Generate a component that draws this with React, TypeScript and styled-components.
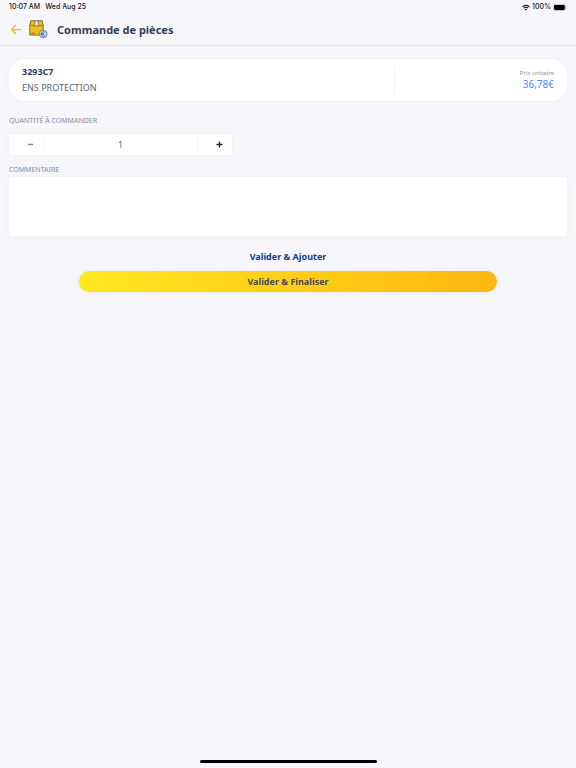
import React, { useState } from "react";
import styled, { createGlobalStyle } from "styled-components";

const GlobalStyle = createGlobalStyle`
  *, *::before, *::after { box-sizing: border-box; }
  body { margin: 0; background: #f6f6fb; }
  button, input, textarea { font: inherit; color: inherit; }
`;

const Screen = styled.div`
  min-height: 100vh;
  display: flex;
  flex-direction: column;
  background: #f6f6fb;
  color: #333f59;
  font-family: "Noto Sans", sans-serif;
`;

const StatusBar = styled.div`
  display: flex;
  align-items: center;
  justify-content: space-between;
  height: 14px;
  padding: 0 9px;
  color: #17171a;
  font: 500 7px/14px Inter, sans-serif;
`;

const StatusGroup = styled.div<{ $gap: number }>`
  display: flex;
  align-items: center;
  gap: ${({ $gap }) => $gap}px;
`;

const Header = styled.header`
  display: flex;
  align-items: center;
  height: 32px;
  padding: 0 9px;
  border-bottom: 1px solid #e5e5eb;
`;

const BackButton = styled.button`
  display: flex;
  padding: 0;
  margin-right: 5px;
  border: 0;
  background: none;
  color: #fdb91d;
  cursor: pointer;
`;

const Title = styled.h1`
  margin: 0 0 0 9px;
  font-size: 11px;
  line-height: 16px;
  font-weight: 700;
`;

const Content = styled.main`
  display: flex;
  flex-direction: column;
  padding: 13px 9px;
`;

const Card = styled.section`
  display: flex;
  align-items: center;
  height: 42px;
  padding: 0 13px;
  border-radius: 16px;
  background: #fff;
  box-shadow: 0 0 4px rgba(50, 50, 90, 0.05);
`;

const Product = styled.div`
  flex: 1;
`;

const Reference = styled.div`
  font-size: 9px;
  line-height: 16px;
  font-weight: 700;
`;

const ProductName = styled.div`
  color: #5b657b;
  font-size: 9px;
  line-height: 16px;
`;

const PriceBlock = styled.div`
  width: 30%;
  height: 27px;
  border-left: 1px solid #f3f3f7;
  text-align: right;
`;

const PriceLabel = styled.div`
  margin-top: 1px;
  color: #8b919e;
  font-size: 6px;
  line-height: 10px;
`;

const Price = styled.div`
  color: #4b8df0;
  font-size: 10px;
  line-height: 12px;
`;

const Label = styled.label<{ $top: number; $bottom: number }>`
  margin-top: ${({ $top }) => $top}px;
  margin-bottom: ${({ $bottom }) => $bottom}px;
  color: #858d9b;
  font-size: 7px;
  line-height: 10px;
`;

const Stepper = styled.div`
  display: flex;
  width: 40%;
  height: 21px;
  overflow: hidden;
  border-radius: 2px;
  background: #fff;
  box-shadow: 0 0 4px rgba(50, 50, 90, 0.05);
`;

const StepButton = styled.button`
  display: flex;
  align-items: center;
  justify-content: flex-end;
  width: 34px;
  padding: 0 9px;
  border: 0;
  background: none;
  color: #222326;
  cursor: pointer;

  &:disabled {
    color: #8e8e92;
    cursor: default;
  }
`;

const Quantity = styled.input`
  flex: 1;
  min-width: 0;
  padding: 0;
  border: 0;
  border-left: 1px solid #f6f6fa;
  border-right: 1px solid #f6f6fa;
  outline: 0;
  background: none;
  color: #5b657b;
  font-size: 9px;
  text-align: center;
`;

const Comment = styled.textarea`
  display: block;
  height: 59px;
  padding: 6px;
  border: 0;
  outline: 0;
  border-radius: 2px;
  resize: none;
  background: #fff;
  box-shadow: 0 0 4px rgba(50, 50, 90, 0.05);
  font-size: 9px;
`;

const Action = styled.button<{ $primary?: boolean }>`
  align-self: center;
  width: 75%;
  height: 21px;
  margin-top: ${({ $primary }) => ($primary ? 4 : 10)}px;
  padding: 0;
  border: 0;
  border-radius: 11px;
  background: ${({ $primary }) =>
    $primary ? "linear-gradient(100deg, #ffe81f, #ffb612)" : "none"};
  box-shadow: ${({ $primary }) =>
    $primary ? "0 0 4px rgba(50, 50, 90, 0.1)" : "none"};
  color: ${({ $primary }) => ($primary ? "#45474d" : "#123d8e")};
  font-size: 9px;
  line-height: 14px;
  font-weight: 700;
  cursor: pointer;
`;

const HomeIndicator = styled.div`
  align-self: center;
  width: 177px;
  height: 3px;
  margin: auto 0 5px;
  border-radius: 2px;
  background: #000;
`;

const WifiIcon = () => (
  <svg width="8" height="7" viewBox="0 0 16 13" aria-label="Wi-Fi">
    <path d="M8 12.5 5.6 10a3.4 3.4 0 0 1 4.8 0Z" fill="currentColor" />
    <path d="M3.6 7.8a6.2 6.2 0 0 1 8.8 0M1 5a10 10 0 0 1 14 0" fill="none" stroke="currentColor" strokeWidth="2.3" />
  </svg>
);

const BatteryIcon = () => (
  <svg width="14" height="7" viewBox="0 0 28 14" aria-label="Batterie">
    <rect x="0.5" y="0.8" width="24.5" height="12.4" rx="3.4" fill="none" stroke="#8f8f94" />
    <rect x="2" y="2.2" width="21.5" height="9.6" rx="2.2" fill="#000" />
    <path d="M26.4 4.8q1.8 2.2 0 4.4Z" fill="#8f8f94" />
  </svg>
);

const ArrowIcon = () => (
  <svg width="14" height="12" viewBox="0 0 14 12" aria-hidden="true">
    <path d="M6.4 1.6 2.4 5.6l4 4M2.5 5.6h9" fill="none" stroke="currentColor" strokeWidth="1.4" strokeLinecap="round" strokeLinejoin="round" />
  </svg>
);

const ParcelIcon = () => (
  <svg width="20" height="20" viewBox="0 0 20 20" aria-hidden="true">
    <path d="M2.8.8h11.4l1 4.4v9.9H1.8V5.2Z" fill="#f5bb1a" stroke="#66654f" strokeWidth=".9" strokeLinejoin="round" />
    <path d="M1.8 5.4h13.4" stroke="#7a713f" strokeWidth=".7" />
    <path d="M6.9.8h3.2v5.9l-1.6-.9-1.6.9Z" fill="#eef0f4" stroke="#66654f" strokeWidth=".7" strokeLinejoin="round" />
    <path d="M3.4 13.2h3.4" stroke="#66654f" strokeWidth=".9" />
    <circle cx="15.2" cy="13.9" r="3.9" fill="#b4d5ec" stroke="#5d8199" strokeWidth=".8" />
    <path d="M16.8 12.2a2.1 2.1 0 1 0 0 3.4M12.8 13.5h3M12.8 14.4h2.8" fill="none" stroke="#346491" strokeWidth=".7" />
  </svg>
);

const StepIcon = ({ plus }: { plus?: boolean }) => (
  <svg width="7" height="7" viewBox="0 0 7 7" aria-hidden="true">
    <path d={plus ? "M.5 3.5h6M3.5.5v6" : "M.8 3.5h5.4"} stroke="currentColor" strokeWidth="1.4" />
  </svg>
);

export default function App() {
  const [quantity, setQuantity] = useState(1);
  const [comment, setComment] = useState("");

  return (
    <Screen>
      <GlobalStyle />
      <StatusBar>
        <StatusGroup $gap={5}>
          <span>10:07 AM</span>
          <span>Wed Aug 25</span>
        </StatusGroup>
        <StatusGroup $gap={2}>
          <WifiIcon />
          <span>100%</span>
          <BatteryIcon />
        </StatusGroup>
      </StatusBar>
      <Header>
        <BackButton type="button" aria-label="Retour">
          <ArrowIcon />
        </BackButton>
        <ParcelIcon />
        <Title>Commande de pièces</Title>
      </Header>
      <Content>
        <Card>
          <Product>
            <Reference>3293C7</Reference>
            <ProductName>ENS PROTECTION</ProductName>
          </Product>
          <PriceBlock>
            <PriceLabel>Prix unitaire</PriceLabel>
            <Price>36,78€</Price>
          </PriceBlock>
        </Card>
        <Label htmlFor="quantity" $top={15} $bottom={8}>QUANTITÉ À COMMANDER</Label>
        <Stepper>
          <StepButton
            type="button"
            aria-label="Diminuer"
            disabled={quantity <= 1}
            onClick={() => setQuantity(quantity - 1)}
          >
            <StepIcon />
          </StepButton>
          <Quantity
            id="quantity"
            inputMode="numeric"
            value={quantity}
            onChange={(e) => setQuantity(Math.max(1, Number(e.target.value) || 1))}
          />
          <StepButton type="button" aria-label="Augmenter" onClick={() => setQuantity(quantity + 1)}>
            <StepIcon plus />
          </StepButton>
        </Stepper>
        <Label htmlFor="comment" $top={10} $bottom={2}>COMMENTAIRE</Label>
        <Comment id="comment" value={comment} onChange={(e) => setComment(e.target.value)} />
        <Action type="button">Valider &amp; Ajouter</Action>
        <Action type="button" $primary>Valider &amp; Finaliser</Action>
      </Content>
      <HomeIndicator />
    </Screen>
  );
}
